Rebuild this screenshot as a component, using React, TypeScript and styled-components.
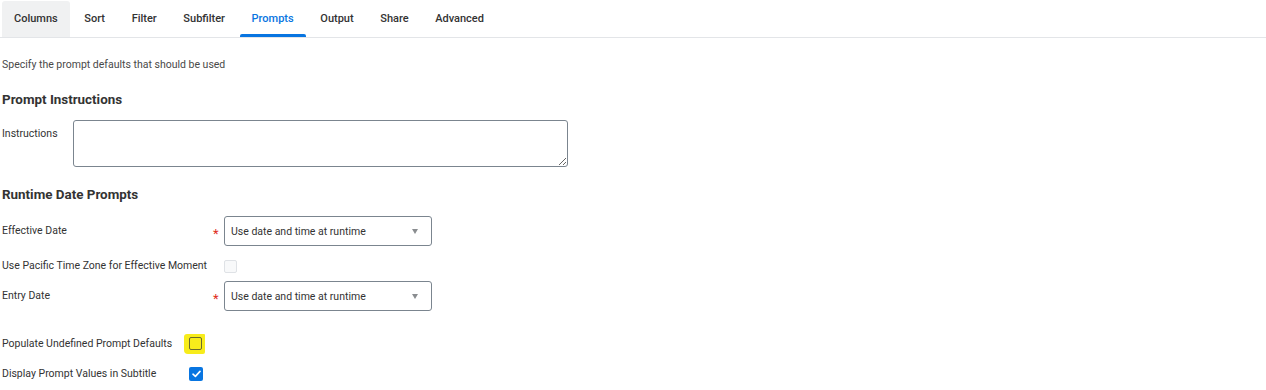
import React from "react";
import styled, { createGlobalStyle } from "styled-components";

const Global = createGlobalStyle`
  html, body { margin: 0; padding: 0; background: #ffffff; }
  body { font-family: Roboto, "Liberation Sans", Arial, sans-serif; color: #333333; }
  * { box-sizing: border-box; }
`;

const Page = styled.div`
  width: 1266px;
  height: 390px;
  overflow: hidden;
  background: #fff;
`;

const TabBar = styled.div`
  display: flex;
  gap: 2.6px;
  padding: 1px 0 0 2px;
  border-bottom: 1px solid #e3e5e8;
  height: 38px;
`;

const Tab = styled.div<{ $active?: boolean; $selected?: boolean }>`
  display: flex;
  align-items: center;
  height: 36px;
  padding: 0 12px 2px;
  font-size: 11px;
  font-weight: 500;
  color: ${(p) => (p.$active ? "#0875e1" : "#333333")};
  background: ${(p) => (p.$selected ? "#f0f1f2" : "transparent")};
  border-radius: 3px 3px 0 0;
  position: relative;
  &::after {
    content: "";
    display: ${(p) => (p.$active ? "block" : "none")};
    position: absolute;
    left: 0;
    right: 0;
    bottom: 0;
    height: 3px;
    background: #0875e1;
    border-radius: 2px 2px 0 0;
  }
`;

const Content = styled.div`
  padding: 0 2px;
`;

const Intro = styled.div`
  font-size: 10.5px;
  line-height: 14px;
  color: #494949;
  margin-top: 20px;
`;

const Heading = styled.h2<{ $top: number }>`
  margin: ${(p) => p.$top}px 0 0;
  font-size: 13.4px;
  line-height: 18px;
  font-weight: 700;
  color: #333333;
`;

const InstrRow = styled.div`
  display: grid;
  grid-template-columns: 71px 495px;
  align-items: start;
  margin-top: 11px;
`;

const Label = styled.div`
  font-size: 10.5px;
  line-height: 14px;
  color: #333333;
  white-space: nowrap;
`;

const InstrLabel = styled(Label)`
  padding-top: 7px;
`;

const TextArea = styled.textarea`
  width: 495px;
  height: 47px;
  border: 1px solid #7b858f;
  border-radius: 3px;
  display: block;
  font-family: inherit;
  resize: both;
  outline: none;
`;

const FieldGrid = styled.div`
  display: grid;
  grid-template-columns: 211px 11px 208px;
  margin-top: 12px;
`;

const FieldRow = styled.div<{ $h: number; $gap: number }>`
  display: contents;
  & > * {
    height: ${(p) => p.$h}px;
    margin-bottom: ${(p) => p.$gap}px;
  }
`;

const Cell = styled.div`
  display: flex;
  align-items: center;
`;

const Star = styled(Cell)`
  color: #de2e21;
  font-size: 13px;
  padding-top: 5px;
  justify-content: flex-start;
`;

const Select = styled.div`
  display: flex;
  align-items: center;
  justify-content: space-between;
  border: 1px solid #7b858f;
  border-radius: 3px;
  padding: 0 13px 0 6px;
  font-size: 10.5px;
  color: #333333;
`;

const Caret = styled.span`
  width: 0;
  height: 0;
  border-left: 3px solid transparent;
  border-right: 3px solid transparent;
  border-top: 5px solid #8a8d90;
`;

const EmptyBox = styled.span`
  width: 13px;
  height: 13px;
  border: 1px solid #dfe2e6;
  border-radius: 2px;
  background: #f8f9fa;
`;

const CheckGrid = styled.div`
  display: grid;
  grid-template-columns: 187px 30px;
  margin-top: 23px;
  row-gap: 11px;
`;

const CheckCell = styled.div`
  display: flex;
  align-items: center;
  height: 19px;
`;

const Highlight = styled.span`
  display: inline-flex;
  align-items: center;
  justify-content: center;
  background: #f7ec1b;
  padding: 3px 3px 4px 5px;
  margin-left: -5px;
  border-radius: 3px 1px 2px 4px;
`;

const HiBox = styled.span`
  width: 13px;
  height: 13px;
  border: 1px solid #6b6a2c;
  border-radius: 2px;
`;

const BlueBox = styled.span`
  width: 14px;
  height: 14px;
  border-radius: 2px;
  background: #0875e1;
  display: inline-flex;
  align-items: center;
  justify-content: center;
`;

const tabs = ["Columns", "Sort", "Filter", "Subfilter", "Prompts", "Output", "Share", "Advanced"];

export default function App() {
  return (
    <Page>
      <Global />
      <TabBar>
        {tabs.map((t) => (
          <Tab key={t} $selected={t === "Columns"} $active={t === "Prompts"}>
            {t}
          </Tab>
        ))}
      </TabBar>
      <Content>
        <Intro>Specify the prompt defaults that should be used</Intro>
        <Heading $top={19}>Prompt Instructions</Heading>
        <InstrRow>
          <InstrLabel>Instructions</InstrLabel>
          <TextArea />
        </InstrRow>
        <Heading $top={19}>Runtime Date Prompts</Heading>
        <FieldGrid>
          <FieldRow $h={30} $gap={13}>
            <Cell><Label>Effective Date</Label></Cell>
            <Star>*</Star>
            <Select>
              <span>Use date and time at runtime</span>
              <Caret />
            </Select>
          </FieldRow>
          <FieldRow $h={14} $gap={8}>
            <Cell><Label>Use Pacific Time Zone for Effective Moment</Label></Cell>
            <Cell />
            <Cell><EmptyBox /></Cell>
          </FieldRow>
          <FieldRow $h={30} $gap={0}>
            <Cell><Label>Entry Date</Label></Cell>
            <Star>*</Star>
            <Select>
              <span>Use date and time at runtime</span>
              <Caret />
            </Select>
          </FieldRow>
        </FieldGrid>
        <CheckGrid>
          <CheckCell><Label>Populate Undefined Prompt Defaults</Label></CheckCell>
          <CheckCell>
            <Highlight><HiBox /></Highlight>
          </CheckCell>
          <CheckCell><Label>Display Prompt Values in Subtitle</Label></CheckCell>
          <CheckCell>
            <BlueBox>
              <svg width="9" height="8" viewBox="0 0 9 8">
                <path d="M1 4.2 L3.4 6.4 L8 1.4" stroke="#fff" strokeWidth="1.6" fill="none" strokeLinecap="round" strokeLinejoin="round" />
              </svg>
            </BlueBox>
          </CheckCell>
        </CheckGrid>
      </Content>
    </Page>
  );
}
